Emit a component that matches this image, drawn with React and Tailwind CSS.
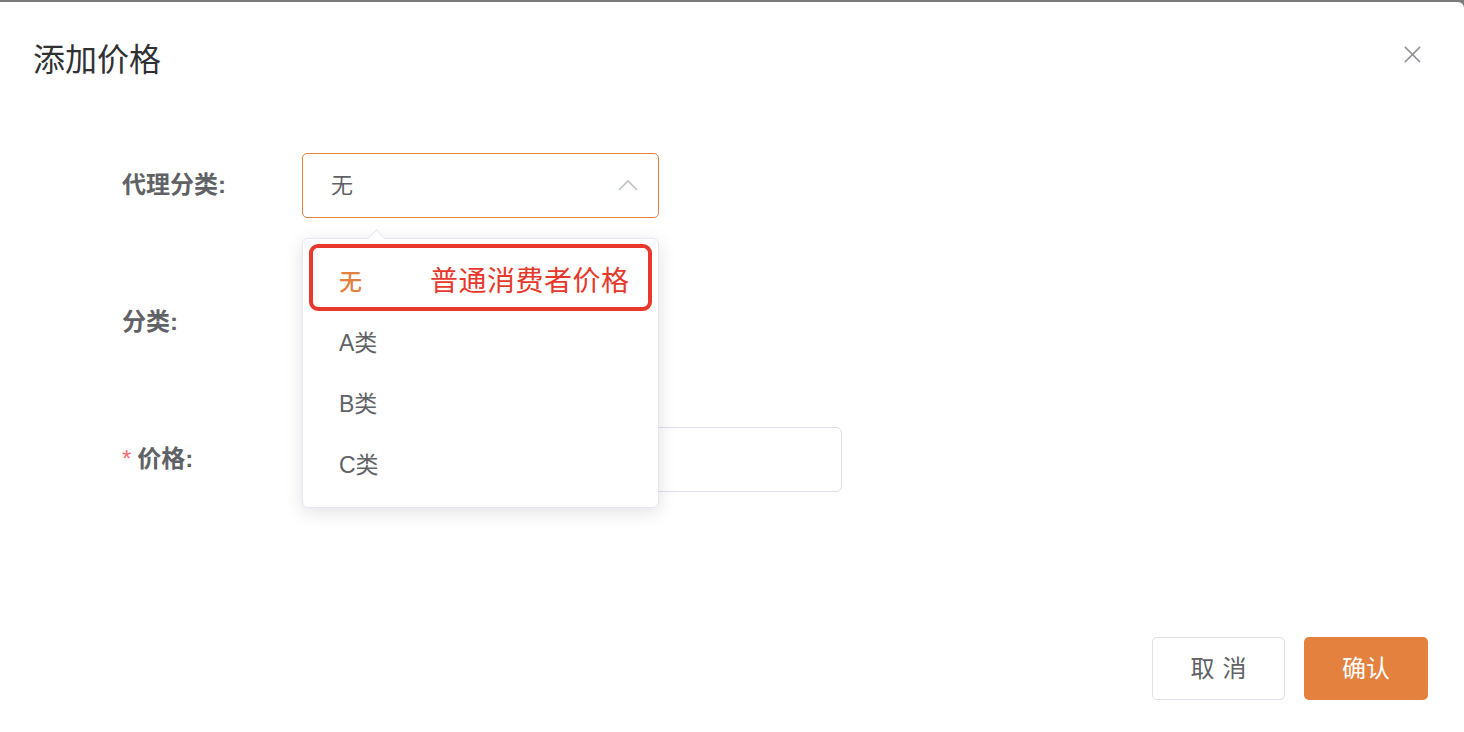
import React from 'react'

const font = { fontFamily: '"Liberation Sans", "Noto Sans CJK SC", sans-serif' }

const options = ['无', 'A类', 'B类', 'C类']

const Dropdown = () => (
  <div className="absolute left-[302px] top-[236px] w-[357px] h-[270px] bg-white border border-[#e4e7ed] rounded-[6px] shadow-[0_4px_18px_rgba(0,0,0,0.12)] pt-[13px] pb-[10px]">
    {/* pointer */}
    <div className="absolute -top-[7px] left-[67px] w-[13px] h-[13px] rotate-45 bg-white border-l border-t border-[#e4e7ed]" />
    {options.map((opt, i) => (
      <div
        key={opt}
        className={`h-[61px] flex items-center pl-[36px] text-[23px] ${i === 0 ? 'text-[#e4813f] font-medium' : 'text-[#606266]'}`}
      >
        {opt}
      </div>
    ))}
    {/* highlight annotation */}
    <div className="absolute left-[6px] top-[5px] w-[343px] h-[67px] border-[4px] border-[#e8382b] rounded-[9px] flex items-center pl-[117px] pt-[8px]">
      <span className="text-[28px] text-[#e8382b] tracking-[0.5px]">普通消费者价格</span>
    </div>
  </div>
)

export default function App() {
  return (
    <div className="w-[1464px] h-[732px] bg-[#7b7b7b] overflow-hidden" style={font}>
      <div className="relative mt-[2px] h-[730px] bg-white rounded-tr-[6px]">
        {/* header */}
        <div className="pl-[33px] pt-[38px]">
          <h2 className="text-[32px] leading-[40px] text-[#303133]">添加价格</h2>
        </div>
        <button className="absolute right-[42px] top-[43px] w-[19px] h-[19px] text-[#909399]">
          <svg viewBox="0 0 20 20" className="w-full h-full" fill="none" stroke="currentColor" strokeWidth="1.6">
            <path d="M2 2 L18 18 M18 2 L2 18" />
          </svg>
        </button>

        {/* form */}
        <div className="mt-[73px] pl-[122px] flex flex-col gap-[73px]">
          <div className="flex items-center h-[64px]">
            <label className="w-[180px] shrink-0 text-[24px] font-bold text-[#606266]">代理分类:</label>
            <div className="w-[357px] h-[65px] border border-[#e4813f] rounded-[5px] flex items-center justify-between pl-[28px] pr-[20px]">
              <span className="text-[22px] text-[#606266]">无</span>
              <svg viewBox="0 0 20 12" className="w-[20px] h-[12px]" fill="none" stroke="#c0c4cc" strokeWidth="1.6">
                <path d="M1 11 L10 2 L19 11" />
              </svg>
            </div>
          </div>

          <div className="flex items-center h-[64px]">
            <label className="w-[180px] shrink-0 text-[24px] font-bold text-[#606266]">分类:</label>
            <div className="w-[357px] h-[65px] border border-[#dcdfe6] rounded-[5px]" />
          </div>

          <div className="flex items-center h-[64px]">
            <label className="w-[180px] shrink-0 text-[24px] font-bold text-[#606266] flex items-center">
              <span className="text-[#f56c6c] mr-[6px] font-normal">*</span>
              价格:
            </label>
            <div className="w-[540px] h-[65px] border border-[#dcdfe6] rounded-[6px]" />
          </div>
        </div>

        {/* footer */}
        <div className="absolute right-[36px] top-[635px] flex gap-[19px]">
          <button className="w-[133px] h-[63px] border border-[#dcdfe6] rounded-[5px] bg-white text-[24px] text-[#606266] tracking-[8px] pl-[8px]">
            取消
          </button>
          <button className="w-[124px] h-[63px] rounded-[5px] bg-[#e4813f] text-[24px] text-white">
            确认
          </button>
        </div>

        <Dropdown />
      </div>
    </div>
  )
}
